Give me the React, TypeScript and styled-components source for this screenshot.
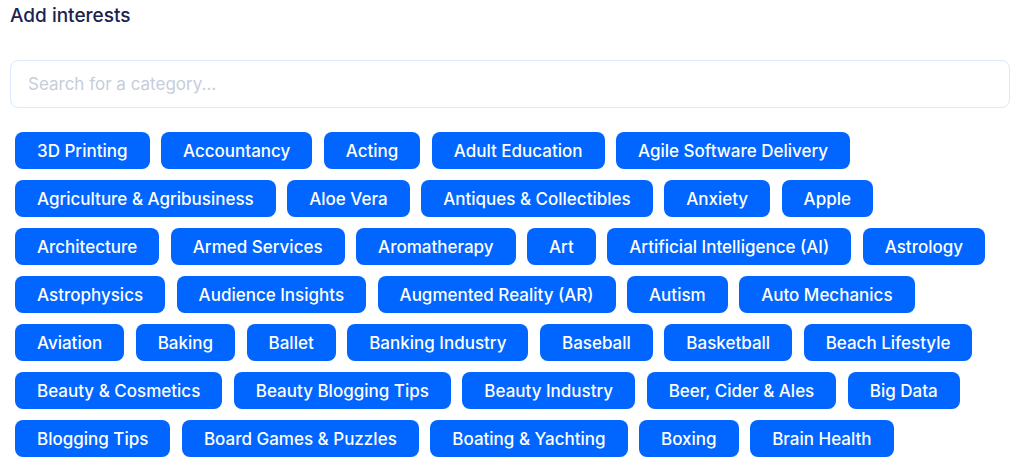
import React from "react";
import styled, { createGlobalStyle } from "styled-components";

const Global = createGlobalStyle`
  html, body { margin: 0; padding: 0; background: #ffffff; }
  body { font-family: "Inter", "Liberation Sans", sans-serif; }
`;

const Page = styled.div`
  padding: 5px 14px 0 10px;
  display: flex;
  flex-direction: column;
`;

const Title = styled.h2`
  margin: 0;
  font-size: 19px;
  font-weight: 500;
  color: #1c2350;
  line-height: 22px;
`;

const Search = styled.input`
  margin-top: 33px;
  height: 48px;
  box-sizing: border-box;
  width: 1000px;
  border: 1.5px solid #dce8fb;
  border-radius: 8px;
  padding: 0 17px;
  font-family: "Inter", sans-serif;
  font-size: 17px;
  color: #1c2350;
  outline: none;
  &::placeholder { color: #c6cddb; }
`;

const Tags = styled.div`
  margin-top: 24px;
  padding-left: 5px;
  width: 995px;
  display: flex;
  flex-wrap: wrap;
  gap: 11px 11.5px;
`;

const Tag = styled.button`
  height: 37px;
  box-sizing: border-box;
  padding: 1px 22px 0;
  border: none;
  border-radius: 8px;
  background: #0066ff;
  color: #ffffff;
  font-family: "Inter", sans-serif;
  font-size: 17px;
  font-weight: 500;
  cursor: pointer;
  white-space: nowrap;
`;

const tags = [
  "3D Printing","Accountancy","Acting","Adult Education","Agile Software Delivery",
  "Agriculture & Agribusiness","Aloe Vera","Antiques & Collectibles","Anxiety","Apple",
  "Architecture","Armed Services","Aromatherapy","Art","Artificial Intelligence (AI)","Astrology",
  "Astrophysics","Audience Insights","Augmented Reality (AR)","Autism","Auto Mechanics",
  "Aviation","Baking","Ballet","Banking Industry","Baseball","Basketball","Beach Lifestyle",
  "Beauty & Cosmetics","Beauty Blogging Tips","Beauty Industry","Beer, Cider & Ales","Big Data",
  "Blogging Tips","Board Games & Puzzles","Boating & Yachting","Boxing","Brain Health",
];

export default function App() {
  return (
    <>
      <Global />
      <Page>
        <Title>Add interests</Title>
        <Search placeholder="Search for a category..." />
        <Tags>
          {tags.map((t) => (
            <Tag key={t}>{t}</Tag>
          ))}
        </Tags>
      </Page>
    </>
  );
}
